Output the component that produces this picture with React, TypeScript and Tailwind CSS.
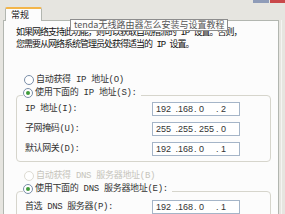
import React from "react"

const cjk = { fontFamily: '"Noto Sans CJK SC", "Liberation Sans", sans-serif' }
// SimSun-like: fixed-width latin with CJK after it
const simsun = { fontFamily: '"Liberation Mono", "Noto Sans CJK SC", monospace' }

function Radio({ checked, disabled }: { checked?: boolean; disabled?: boolean }) {
    return (
        <span
            className={`inline-flex w-[10px] h-[10px] rounded-full border items-center justify-center bg-white shrink-0 ${
                disabled ? "border-[#dddbd2]" : "border-[#7a8ea8]"
            }`}
        >
            {checked && <span className="w-[4px] h-[4px] rounded-full bg-[#3f9b3a]" />}
        </span>
    )
}

function IpBox({ parts }: { parts: string[] }) {
    return (
        <div
            className="w-[88px] h-[14px] border border-[#a5b5c8] bg-white flex items-center text-[9px] leading-[12px] text-[#333] pl-[3px] whitespace-pre"
            style={{ fontFamily: '"Liberation Sans", sans-serif' }}
        >
            <span className="w-[17px]">{parts[0]}</span>
            <span className="w-[21px]">{" ." + parts[1]}</span>
            <span className="w-[22px]">{". " + parts[2]}</span>
            <span>{". " + parts[3]}</span>
        </div>
    )
}

function Row({ label, parts }: { label: string; parts: string[] }) {
    return (
        <div className="flex items-center justify-between pl-[8px] pr-[30px] h-[14px]">
            <span className="text-[9px] leading-[12px] text-[#333] whitespace-nowrap tracking-[-0.4px]" style={simsun}>
                {label}
            </span>
            <IpBox parts={parts} />
        </div>
    )
}

export default function App() {
    return (
        <div className="w-[285px] h-[214px] overflow-hidden bg-[#e6e5e0] relative" style={cjk}>
            {/* window buttons cut off at the top */}
            <div className="absolute top-0 left-[253px] w-[16px] h-[3px] bg-[#8f9cb8]" />
            <div className="absolute top-0 left-[270px] w-[15px] h-[3px] bg-[#c9484a]" />

            {/* tab strip */}
            <div className="h-[20px] flex items-end pl-[5px]">
                <div className="w-[37px] h-[14px] bg-[#fcfcfc] border-x border-[#b2b6b0] border-t-2 border-t-[#f3b54a] rounded-t-[2px] text-[9px] text-[#222] pl-[5px] leading-[11px] -mb-px relative z-10">
                    常规
                </div>
            </div>

            <div className="flex">
                {/* tab panel */}
                <div className="ml-[3px] w-[276px] h-[200px] border border-[#b2b6b0] bg-[#fcfcfc] pl-[12px]">
                    <div
                        className="pt-[6px] text-[9px] leading-[12px] text-[#111] tracking-[-1px] whitespace-nowrap"
                        style={simsun}
                    >
                        <p>如果网络支持此功能，则可以获取自动指派的 IP 设置。否则，</p>
                        <p>您需要从网络系统管理员处获得适当的 IP 设置。</p>
                    </div>

                    <div
                        className="mt-[23px] ml-[8px] flex items-center gap-[2px] h-[12px] text-[9px] leading-[12px] text-[#333] tracking-[-0.3px]"
                        style={simsun}
                    >
                        <Radio />
                        <span>自动获得 IP 地址(O)</span>
                    </div>

                    <div className="mt-[9px] w-[255px] h-[67px] border border-[#d6d5cc] rounded-[4px] relative">
                        <div
                            className="absolute -top-[9px] left-[6px] bg-[#fcfcfc] pr-[4px] flex items-center gap-[2px] h-[12px] text-[9px] leading-[12px] text-[#333] tracking-[-0.3px]"
                            style={simsun}
                        >
                            <Radio checked />
                            <span>使用下面的 IP 地址(S):</span>
                        </div>
                        <div className="pt-[6px] flex flex-col gap-[6px]">
                            <Row label="IP 地址(I):" parts={["192", "168", "0", "2"]} />
                            <Row label="子网掩码(U):" parts={["255", "255", "255", "0"]} />
                            <Row label="默认网关(D):" parts={["192", "168", "0", "1"]} />
                        </div>
                    </div>

                    <div
                        className="mt-[8px] ml-[8px] flex items-center gap-[2px] h-[12px] text-[9px] leading-[12px] text-[#c6c4bb] tracking-[-0.3px]"
                        style={simsun}
                    >
                        <Radio disabled />
                        <span>自动获得 DNS 服务器地址(B)</span>
                    </div>

                    <div className="mt-[9px] w-[255px] h-[40px] border border-[#d6d5cc] rounded-[4px] relative">
                        <div
                            className="absolute -top-[9px] left-[6px] bg-[#fcfcfc] pr-[4px] flex items-center gap-[2px] h-[12px] text-[9px] leading-[12px] text-[#333] tracking-[-0.3px]"
                            style={simsun}
                        >
                            <Radio checked />
                            <span>使用下面的 DNS 服务器地址(E):</span>
                        </div>
                        <div className="pt-[8px]">
                            <Row label="首选 DNS 服务器(P):" parts={["192", "168", "0", "1"]} />
                        </div>
                    </div>
                </div>
                {/* window edge on the right */}
                <div className="ml-[2px] w-[1px] h-[200px] bg-[#f4f4f2]" />
            </div>

            {/* tooltip */}
            <div className="absolute left-[70px] top-[19px] h-[12px] px-[3px] border border-[#8d8d8d] bg-[#fdfdfd] text-[9px] leading-[10px] text-[#555] whitespace-nowrap">
                tenda无线路由器怎么安装与设置教程
            </div>
        </div>
    )
}
